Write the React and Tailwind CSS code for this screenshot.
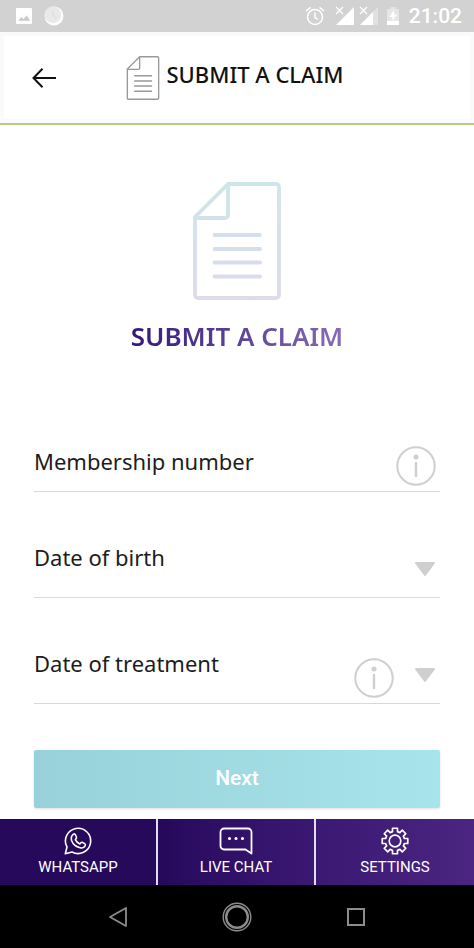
import React, { useState } from 'react';

function DocumentIcon({ className, stroke, strokeWidth }) {
  return (
    <svg viewBox="0 0 88 118" className={className} fill="none" stroke={stroke} strokeWidth={strokeWidth} strokeLinecap="round" strokeLinejoin="round" aria-hidden="true">
      <defs>
        <linearGradient id="docFade" gradientUnits="userSpaceOnUse" x1="0" y1="0" x2="0" y2="118">
          <stop offset="0" stopColor="#cde6e9" />
          <stop offset="0.5" stopColor="#d6dfeb" />
          <stop offset="1" stopColor="#dddaec" />
        </linearGradient>
      </defs>
      <path d="M35 2H83a3 3 0 0 1 3 3V113a3 3 0 0 1-3 3H5a3 3 0 0 1-3-3V35L35 2V33a3 3 0 0 1-3 3H2" />
      <path d="M21.500 53H67M21.500 67H67M21.500 80.500H67M21.500 94.500H67" />
    </svg>
  );
}

function InfoButton({ label }) {
  return (
    <button type="button" aria-label={label} className="mb-[5px] shrink-0 self-end">
      <svg viewBox="0 0 40 40" className="size-10" fill="none" stroke="#cfcfcf" strokeWidth="2" aria-hidden="true">
        <circle cx="20" cy="20" r="18.700" />
        <circle cx="20" cy="11" r="2.500" fill="#cfcfcf" stroke="none" />
        <path d="M20 17V30" strokeWidth="2.400" strokeLinecap="round" />
      </svg>
    </button>
  );
}

function Caret() {
  return (
    <svg viewBox="0 0 22 16" className="mb-5 h-4 w-[22px] shrink-0 self-end" fill="#cfcfcf" stroke="#cfcfcf" strokeWidth="2" strokeLinejoin="round" aria-hidden="true">
      <path d="M2 2H20L11 14Z" />
    </svg>
  );
}

function DateField({ id, label, children }) {
  return (
    <div className="flex h-[57px] items-start border-b border-[#d9d9d9] pr-1">
      <label htmlFor={id} className="text-[22px]/8">{label}</label>
      <select id={id} className="h-full min-w-0 flex-1 appearance-none bg-transparent outline-none" />
      <div className="flex h-full items-end gap-5">
        {children}
        <Caret />
      </div>
    </div>
  );
}

// Outline of an eight-tooth cog centred on 14,14
const cogPath = Array.from({ length: 8 }, (_, i) => {
  const point = (r, deg) => {
    const a = ((i * 45 + deg) * Math.PI) / 180;
    return `${(14 + r * Math.sin(a)).toFixed(2)} ${(14 - r * Math.cos(a)).toFixed(2)}`;
  };
  return `${i === 0 ? 'M' : 'L'}${point(9.7, -15)}L${point(13, -11)}L${point(13, 11)}L${point(9.7, 15)}`;
}).join('') + 'Z';

function WhatsappIcon() {
  return (
    <svg viewBox="0 0 28 28" className="size-7" fill="none" stroke="currentColor" strokeWidth="1.600" strokeLinejoin="round" aria-hidden="true">
      <path d="M1.300 26.700 3 20A12.600 12.600 0 1 1 8 25Z" />
      <path d="M9.500 7.200c.7-.5 1.500-.3 1.900.5l1.100 2.600c.3.800-.2 1.300-1.200 2.400.9 1.900 2.400 3.300 4.500 4.200 1-1.300 1.500-1.900 2.300-1.600l2.600 1.300c.8.400.9 1 .5 2-.9 1.900-3 2.700-5 2.200-4.500-1.200-7.400-4.100-8.600-7.400-.7-2.300.2-4.900 1.900-6.200Z" />
    </svg>
  );
}

function ChatIcon() {
  return (
    <svg viewBox="0 0 34 28" className="h-7 w-9" fill="none" stroke="currentColor" strokeWidth="1.800" strokeLinejoin="round" aria-hidden="true">
      <path d="M5 1.500H29A3.500 3.500 0 0 1 32.500 5V26.500L26.500 22.500H5A3.500 3.500 0 0 1 1.500 19V5A3.500 3.500 0 0 1 5 1.500Z" />
      <path d="M10.500 11.500h.01M17 11.500h.01M23.500 11.500h.01" strokeWidth="3.200" strokeLinecap="round" />
    </svg>
  );
}

function SettingsIcon() {
  return (
    <svg viewBox="0 0 28 28" className="size-7" fill="none" stroke="currentColor" strokeWidth="1.700" strokeLinejoin="round" aria-hidden="true">
      <path d={cogPath} />
      <circle cx="14" cy="14" r="5.800" />
    </svg>
  );
}

function StatusBar() {
  return (
    <div className="flex h-8 items-center bg-[#d2d2d2] px-3 text-white">
      <div className="flex items-center gap-3 pl-1">
        <svg viewBox="0 0 17 17" className="size-4" aria-hidden="true">
          <rect width="17" height="17" rx="1" fill="currentColor" />
          <path d="M2.500 13.500 5.500 9.500 8 12 11.500 8 15 13.500Z" fill="#c9c9c9" />
        </svg>
        <svg viewBox="0 0 18 18" className="size-5" aria-hidden="true">
          <circle cx="9" cy="9" r="8.500" fill="#fff" />
          <circle cx="8" cy="8" r="7.500" fill="#e9e9e9" />
          <path d="M8 4v4l3 3" fill="none" stroke="#dedede" strokeWidth="1.200" />
        </svg>
      </div>
      <div className="ml-auto flex items-center">
        <svg viewBox="0 0 20 20" className="mr-2.5 size-5" fill="none" stroke="currentColor" strokeWidth="1.500" aria-hidden="true">
          <circle cx="10" cy="11" r="7.500" />
          <path d="M10 6.500V11.500L13 13.500M1 5 5.500 1.300M19 5 14.500 1.300" />
        </svg>
        <svg viewBox="0 0 20 20" className="mr-1 size-5" fill="currentColor" aria-hidden="true">
          <path d="M19 1V19H1Z" />
          <path d="M1 1 8 8M8 1 1 8" stroke="currentColor" strokeWidth="1.200" />
        </svg>
        <svg viewBox="0 0 20 20" className="mr-2 size-5" fill="currentColor" aria-hidden="true">
          <path d="M19 1V19H1Z" opacity="0.350" />
          <path d="M14 6V19H1Z" />
          <path d="M1 1 8 8M8 1 1 8" stroke="currentColor" strokeWidth="1.200" />
        </svg>
        <svg viewBox="0 0 12 20" className="mr-2.5 h-5 w-3" aria-hidden="true">
          <path d="M0 3H3.500V1H8.500V3H12V19H0Z" fill="#e6e6e6" />
          <path d="M0 15H12V19H0Z" fill="#fff" />
          <path d="M7 4 2.500 11H5.500V15L10 8.500H7Z" fill="#fff" />
        </svg>
        <span className="font-['Roboto',sans-serif] text-[21px]/8 font-medium">21:02</span>
      </div>
    </div>
  );
}

export default function App() {
  const [membership, setMembership] = useState('');

  return (
    <div className="flex min-h-screen flex-col bg-white font-['Noto_Sans',sans-serif] text-[#1c1c1c]">
      <StatusBar />

      <header className="border-b-2 border-[#b4cb84] bg-[#fafafa] p-1">
        <div className="grid h-[83px] grid-cols-[1fr_auto_1fr] items-center bg-white px-7">
          <button type="button" aria-label="Back" className="justify-self-start">
            <svg viewBox="0 0 24 20" className="h-5 w-6" fill="none" stroke="#111" strokeWidth="2" aria-hidden="true">
              <path d="M24 10H1.500M10.500 .8 1.500 10 10.500 19.200" />
            </svg>
          </button>
          <div className="flex items-start gap-1.5 pr-1">
            <DocumentIcon className="h-11 w-[34px]" stroke="#999" strokeWidth="3.600" />
            <span className="text-[22px]/9 font-medium text-[#111]">SUBMIT A CLAIM</span>
          </div>
        </div>
      </header>

      <main className="flex flex-1 flex-col px-[34px] pt-[57px] pb-[11px]">
        <DocumentIcon className="h-[118px] w-[88px] self-center" stroke="url(#docFade)" strokeWidth="3.800" />
        <h1 className="mt-4 self-center bg-linear-to-r from-[#35167a] to-[#8a6bb4] bg-clip-text text-[26px]/10 font-semibold text-transparent">
          SUBMIT A CLAIM
        </h1>

        <form className="mt-auto flex flex-col" onSubmit={(e) => e.preventDefault()}>
          <div className="flex flex-col gap-[49px]">
            <div className="flex h-[47px] items-start border-b border-[#d9d9d9] pr-1">
              <label htmlFor="membership" className="text-[22px]/8">Membership number</label>
              <input
                id="membership"
                type="text"
                value={membership}
                onChange={(e) => setMembership(e.target.value)}
                className="h-full min-w-0 flex-1 bg-transparent px-2 text-lg outline-none"
              />
              <InfoButton label="About the membership number" />
            </div>
            <DateField id="birth" label="Date of birth" />
            <DateField id="treatment" label="Date of treatment">
              <InfoButton label="About the date of treatment" />
            </DateField>
          </div>

          <button type="submit" className="mt-[46px] h-[58px] rounded-xs bg-linear-to-r from-[#98d1d9] to-[#a7e4eb] font-['Roboto',sans-serif] text-[21px] font-medium text-white shadow-sm">
            Next
          </button>
        </form>
      </main>

      <nav className="grid h-[66px] grid-cols-3 divide-x-2 divide-[#e4dcf0] bg-linear-to-r from-[#27095c] from-35% via-[#371670] via-60% to-[#4b2581] font-['Roboto',sans-serif] text-[15px]/6 text-white">
        <a href="#whatsapp" className="flex flex-col items-center pt-2">
          <WhatsappIcon />
          WHATSAPP
        </a>
        <a href="#chat" className="flex flex-col items-center pt-2">
          <ChatIcon />
          LIVE CHAT
        </a>
        <a href="#settings" className="flex flex-col items-center pt-2">
          <SettingsIcon />
          SETTINGS
        </a>
      </nav>

      <div className="flex h-[63px] items-center justify-center gap-[94px] bg-black text-[#8c8c8c]">
        <button type="button" aria-label="System back">
          <svg viewBox="0 0 20 20" className="size-5" fill="none" stroke="currentColor" strokeWidth="1.800" strokeLinejoin="round" aria-hidden="true">
            <path d="M18 1V19L2 10Z" />
          </svg>
        </button>
        <button type="button" aria-label="Home">
          <svg viewBox="0 0 30 30" className="size-[30px]" fill="none" stroke="currentColor" aria-hidden="true">
            <circle cx="15" cy="15" r="13.800" strokeWidth="1.400" />
            <circle cx="15" cy="15" r="10.800" strokeWidth="2.400" />
          </svg>
        </button>
        <button type="button" aria-label="Recent apps">
          <svg viewBox="0 0 20 20" className="size-5" fill="none" stroke="currentColor" strokeWidth="2" aria-hidden="true">
            <rect x="2" y="2" width="16" height="16" />
          </svg>
        </button>
      </div>
    </div>
  );
}
